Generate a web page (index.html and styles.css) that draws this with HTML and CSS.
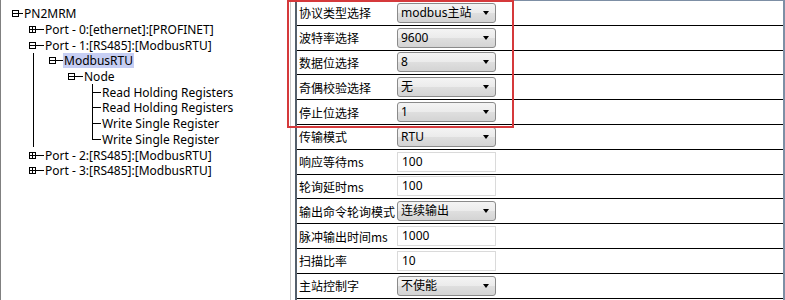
FILE: index.html
```html
<!DOCTYPE html>
<html lang="zh-CN">
<head>
    <meta charset="UTF-8">
    <meta name="viewport" content="width=device-width, initial-scale=1.0">
    <title>PN2MRM 配置</title>
    <link rel="stylesheet" href="styles.css">
</head>
<body>
    <div class="window">
        <div class="tree">
            <div class="node l0"><span class="tog"></span><span class="dash d0"></span><span class="text">PN2MRM</span></div>
            <div class="node l1"><span class="tog plus"></span><span class="dash d1"></span><span class="text">Port - 0:[ethernet]:[PROFINET]</span></div>
            <div class="node l1"><span class="tog"></span><span class="dash d1"></span><span class="text">Port - 1:[RS485]:[ModbusRTU]</span></div>
            <div class="kids">
                <div class="node l2"><span class="tog"></span><span class="dash d2"></span><span class="text selected">ModbusRTU</span></div>
                <div class="node l3"><span class="tog"></span><span class="dash d3"></span><span class="text">Node</span></div>
                <div class="node leaf"><span class="dash d4"></span><span class="text">Read Holding Registers</span></div>
                <div class="node leaf"><span class="dash d4"></span><span class="text">Read Holding Registers</span></div>
                <div class="node leaf"><span class="dash d4"></span><span class="text">Write Single Register</span></div>
                <div class="node leaf last"><span class="dash d4"></span><span class="text">Write Single Register</span></div>
            </div>
            <div class="node l1"><span class="tog plus"></span><span class="dash d1"></span><span class="text">Port - 2:[RS485]:[ModbusRTU]</span></div>
            <div class="node l1"><span class="tog plus"></span><span class="dash d1"></span><span class="text">Port - 3:[RS485]:[ModbusRTU]</span></div>
        </div>

        <div class="split"></div>

        <div class="props">
            <div class="row"><div class="name">协议类型选择</div><div class="combo"><span>modbus主站</span><i class="arrow"></i></div></div>
            <div class="row"><div class="name">波特率选择</div><div class="combo"><span>9600</span><i class="arrow"></i></div></div>
            <div class="row"><div class="name">数据位选择</div><div class="combo"><span>8</span><i class="arrow"></i></div></div>
            <div class="row"><div class="name">奇偶校验选择</div><div class="combo"><span>无</span><i class="arrow"></i></div></div>
            <div class="row"><div class="name">停止位选择</div><div class="combo"><span>1</span><i class="arrow"></i></div></div>
            <div class="row"><div class="name">传输模式</div><div class="combo"><span>RTU</span><i class="arrow"></i></div></div>
            <div class="row"><div class="name">响应等待ms</div><div class="field">100</div></div>
            <div class="row"><div class="name">轮询延时ms</div><div class="field">100</div></div>
            <div class="row"><div class="name">输出命令轮询模式</div><div class="combo"><span>连续输出</span><i class="arrow"></i></div></div>
            <div class="row"><div class="name">脉冲输出时间ms</div><div class="field">1000</div></div>
            <div class="row"><div class="name">扫描比率</div><div class="field">10</div></div>
            <div class="row"><div class="name">主站控制字</div><div class="combo"><span>不使能</span><i class="arrow"></i></div></div>
        </div>
    </div>

    <div class="mark"></div>
</body>
</html>
```

FILE: styles.css
```css
body {
    margin: 0;
    padding: 0;
    background: #ffffff;
    font-family: "Noto Sans", "Noto Sans CJK SC", sans-serif;
    font-size: 12px;
    color: #000;
    overflow: hidden;
}
.window {
    display: flex;
    width: 785px;
    height: 300px;
}

/* tree */
.tree {
    width: 291px;
    box-sizing: border-box;
    border-left: 1px solid #808080;
    border-right: 1px solid #c8c8c8;
    padding-top: 6px;
}
.node {
    display: flex;
    align-items: center;
    height: 15.7px;
    white-space: nowrap;
}
.l0 { padding-left: 11px; }
.l1 { padding-left: 28px; }
.l2 { padding-left: 48px; }
.l3 { padding-left: 67px; }
.leaf { padding-left: 91px; }
.tog {
    position: relative;
    width: 7px;
    height: 7px;
    box-sizing: border-box;
    border: 1px solid #000;
    flex: none;
}
.tog::before {
    content: "";
    position: absolute;
    left: 0;
    right: 0;
    top: 2px;
    height: 1px;
    background: #000;
}
.tog.plus::after {
    content: "";
    position: absolute;
    top: 0;
    bottom: 0;
    left: 2px;
    width: 1px;
    background: #000;
}
.dash {
    height: 1px;
    background: #000;
    flex: none;
}
.d0 { width: 4px; }
.d1 { width: 8px; }
.d2 { width: 7px; }
.d3 { width: 8px; }
.d4 { width: 9px; }
.text {
    padding-left: 1px;
    padding-right: 1px;
}
.selected {
    background: #c6cef3;
    line-height: 15px;
}
.kids {
    background: linear-gradient(#000, #000) 32px 0 / 1px 100% no-repeat;
}
.leaf {
    background: linear-gradient(#000, #000) 91px 0 / 1px 100% no-repeat;
}
.leaf.last {
    background-size: 1px 50%;
}
.kids .leaf {
    background:
        linear-gradient(#000, #000) 91px 0 / 1px 100% no-repeat,
        linear-gradient(#000, #000) 32px 0 / 1px 100% no-repeat;
}
.kids .leaf.last {
    background:
        linear-gradient(#000, #000) 91px 0 / 1px 50% no-repeat,
        linear-gradient(#000, #000) 32px 0 / 1px 100% no-repeat;
}

.split {
    width: 4px;
    flex: none;
}

/* property grid */
.props {
    flex: 1;
    border-top: 1px solid #7d8fa5;
    border-left: 2px solid #55606c;
    border-right: 2px solid #7d8fa5;
}
.row {
    display: flex;
    align-items: center;
    height: 24.8px;
    box-sizing: border-box;
    border-bottom: 1px solid #000;
}
.name {
    width: 100px;
    padding-left: 2px;
    box-sizing: border-box;
    font-family: "Noto Sans CJK SC", sans-serif;
    white-space: nowrap;
    flex: none;
}
.combo, .field {
    width: 99px;
    height: 20px;
    box-sizing: border-box;
    display: flex;
    align-items: center;
    padding-left: 3px;
    line-height: 18px;
}
.combo {
    justify-content: space-between;
    padding-right: 6px;
    border: 1px solid #8a8a8a;
    border-radius: 3px;
    background: linear-gradient(#f4f4f4, #ebebeb 50%, #dfdfdf 50%, #d4d4d4);
}
.field {
    border: 1px solid #dadada;
    background: #fff;
    padding-left: 4px;
}
.arrow {
    width: 0;
    height: 0;
    border-left: 3px solid transparent;
    border-right: 3px solid transparent;
    border-top: 4px solid #000;
}

/* red annotation frame */
.mark {
    position: absolute;
    left: 287px;
    top: 0;
    width: 227px;
    height: 128px;
    box-sizing: border-box;
    border: 2px solid #d5393b;
}
```
